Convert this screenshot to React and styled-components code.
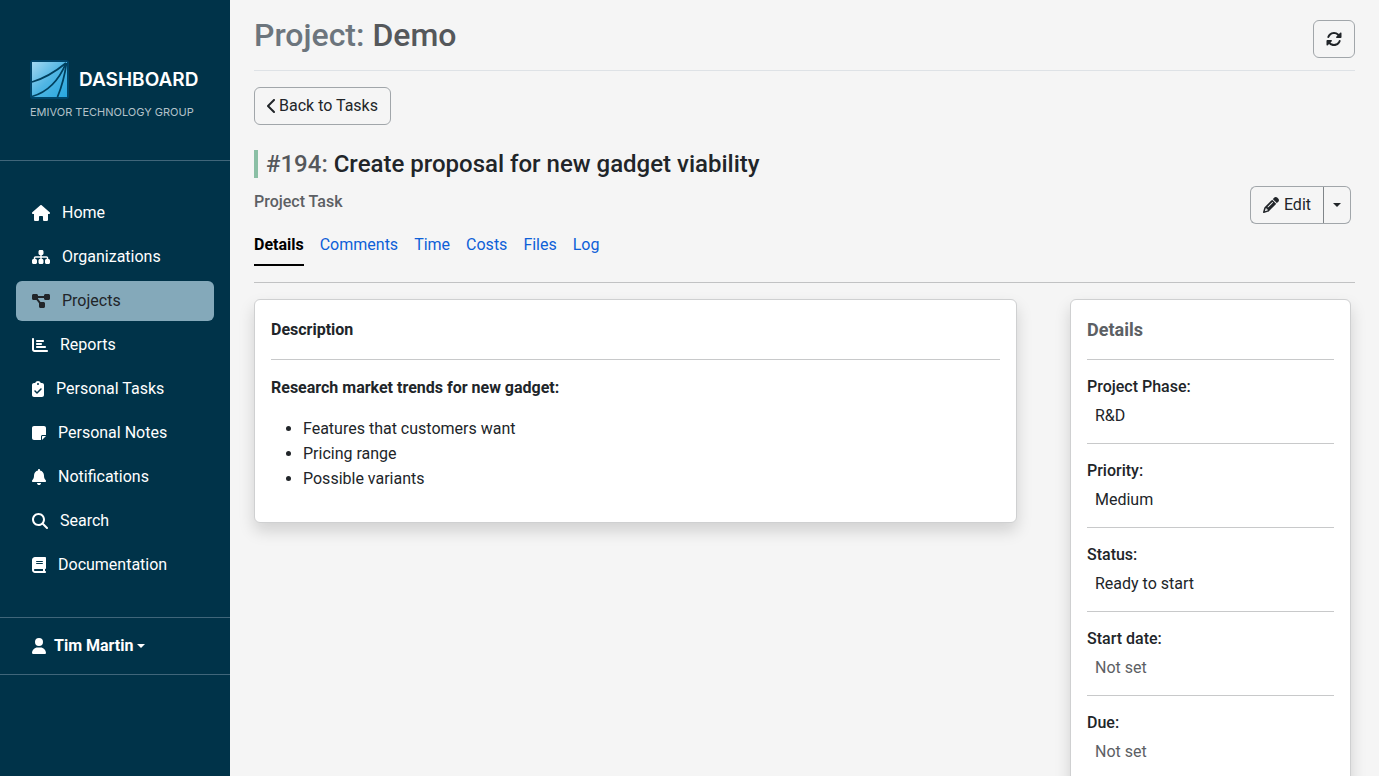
import React from "react";
import styled, { createGlobalStyle } from "styled-components";
import {
  FaHouse,
  FaSitemap,
  FaDiagramProject,
  FaChartBar,
  FaClipboardCheck,
  FaNoteSticky,
  FaBell,
  FaMagnifyingGlass,
  FaBook,
  FaUser,
  FaRotate,
  FaPencil,
  FaChevronLeft,
} from "react-icons/fa6";

const GlobalStyle = createGlobalStyle`
  *, *::before, *::after { box-sizing: border-box; }
  body {
    margin: 0;
    background: #f5f5f5;
    color: #212529;
    font-family: Roboto, "Liberation Sans", sans-serif;
    font-size: 16px;
    line-height: 24px;
  }
  h1, h2, h3, p, ul, dl, dd { margin: 0; padding: 0; }
  button { font: inherit; color: inherit; cursor: pointer; }
  a { text-decoration: none; }
`;

const Shell = styled.div`
  display: flex;
  height: 100vh;
`;

const Sidebar = styled.aside`
  flex: 0 0 230px;
  background: #003349;
  color: #fff;
  overflow: hidden;
`;

const Brand = styled.a`
  display: flex;
  flex-direction: column;
  height: 161px;
  padding: 59px 28px 0 30px;
  border-bottom: 1px solid #40667a;
  color: #fff;
`;

const BrandRow = styled.span`
  display: flex;
  align-items: center;
  gap: 9px;
`;

const BrandName = styled.span`
  padding-top: 2px;
  font-family: Inter, "Liberation Sans", sans-serif;
  font-size: 19px;
  font-weight: 600;
`;

const BrandOwner = styled.span`
  margin-top: 5px;
  color: #b3c2c9;
  font-family: Inter, "Liberation Sans", sans-serif;
  font-size: 11px;
  line-height: 16px;
  white-space: nowrap;
`;

const Icon = styled.span`
  display: flex;
  flex: none;
  width: ${(p) => p.$width || 16}px;
  height: 16px;

  svg {
    width: 100%;
    height: 100%;
  }
`;

const Nav = styled.nav`
  display: flex;
  flex-direction: column;
  gap: 4px;
  padding: 32px 16px;
`;

const NavLink = styled.a`
  display: flex;
  align-items: center;
  gap: 12px;
  height: 40px;
  padding: 0 16px;
  border-radius: 6px;
  background: ${(p) => (p.$active ? "#84a9ba" : "transparent")};
  color: ${(p) => (p.$active ? "#212529" : "#fff")};
`;

const UserBar = styled.div`
  border: solid #40667a;
  border-width: 1px 0;
`;

const UserButton = styled.button`
  display: flex;
  align-items: center;
  gap: 4px;
  width: 100%;
  height: 56px;
  padding: 0 32px;
  border: 0;
  background: none;
  font-weight: 700;

  ${Icon} { margin-right: 4px; }
`;

const Caret = styled.span`
  border: 4px solid transparent;
  border-top-color: currentColor;
  border-bottom: 0;
`;

const Main = styled.main`
  flex: 1;
  min-width: 0;
  padding: 16px 24px;
  overflow-y: auto;
  scrollbar-width: none;
`;

const PageHeader = styled.header`
  display: flex;
  justify-content: space-between;
  align-items: flex-start;
  padding-bottom: 12px;
  border-bottom: 1px solid #dee2e6;
`;

const PageTitle = styled.h1`
  color: #55585b;
  font-size: 32px;
  font-weight: 500;
  line-height: 38px;

  span { color: #6c757d; }
`;

const Button = styled.button`
  display: inline-flex;
  align-items: center;
  gap: 5px;
  height: 38px;
  padding: 0 12px;
  border: 1px solid #a1a6aa;
  border-radius: 6px;
  background: transparent;
`;

const RefreshButton = styled(Button)`
  margin-top: 4px;
`;

const BackButton = styled(Button)`
  gap: 2px;
  margin-top: 16px;
`;

const ButtonGroup = styled.div`
  display: flex;

  button:first-child {
    border-radius: 6px 0 0 6px;
    border-right: 0;
  }
  button:last-child {
    padding: 0 9px;
    border-left-color: #808589;
    border-radius: 0 6px 6px 0;
  }
`;

const TaskTitle = styled.h2`
  margin: 25px 0 8px;
  padding-left: 8px;
  border-left: 4px solid #8bbfa5;
  font-size: 24px;
  font-weight: 500;
  line-height: 28px;

  span { color: #55585b; }
`;

const TaskBar = styled.div`
  display: flex;
  justify-content: space-between;
  align-items: flex-start;
  padding-right: 4px;
`;

const TaskKind = styled.p`
  padding-top: 4px;
  color: #5c6064;
  font-weight: 500;
`;

const Tabs = styled.nav`
  display: flex;
  gap: 16px;
  padding-bottom: 16px;
  border-bottom: 1px solid #c1c2c3;
`;

const Tab = styled.a`
  padding: 9px 0 7px;
  border-bottom: 2px solid ${(p) => (p.$active ? "#000" : "transparent")};
  color: ${(p) => (p.$active ? "#000" : "#0d60d8")};
  font-weight: ${(p) => (p.$active ? 700 : 400)};
`;

const Columns = styled.div`
  display: grid;
  grid-template-columns: minmax(0, 1fr) 281px;
  align-items: start;
  gap: 53px;
  padding: 16px 4px 16px 0;
`;

const Card = styled.section`
  padding: 16px;
  border: 1px solid #cfd0d1;
  border-radius: 6px;
  background: #fff;
  box-shadow: 0 8px 16px rgba(0, 0, 0, 0.15);
`;

const CardTitle = styled.h3`
  padding-bottom: 16px;
  border-bottom: 1px solid #c8c9ca;
  color: ${(p) => (p.$muted ? "#5c6064" : "inherit")};
  font-size: ${(p) => (p.$muted ? 18 : 16)}px;
  font-weight: 700;
  line-height: 27px;
`;

const Lead = styled.p`
  margin: 16px 0;
  font-weight: 700;
`;

const BulletList = styled.ul`
  padding: 0 0 15px 32px;
  line-height: 25px;
`;

const Field = styled.div`
  padding: 15px 0;

  & + & { border-top: 1px solid #c8c9ca; }
`;

const FieldName = styled.dt`
  margin-bottom: 5px;
  font-weight: 500;
`;

const FieldValue = styled.dd`
  padding-left: 8px;
  color: ${(p) => (p.$unset ? "#5c6064" : "inherit")};
`;

const navItems = [
  ["Home", FaHouse, 18],
  ["Organizations", FaSitemap, 18],
  ["Projects", FaDiagramProject, 18],
  ["Reports", FaChartBar, 16],
  ["Personal Tasks", FaClipboardCheck, 12],
  ["Personal Notes", FaNoteSticky, 14],
  ["Notifications", FaBell, 14],
  ["Search", FaMagnifyingGlass, 16],
  ["Documentation", FaBook, 14],
];

const tabs = ["Details", "Comments", "Time", "Costs", "Files", "Log"];

const fields = [
  ["Project Phase:", "R&D"],
  ["Priority:", "Medium"],
  ["Status:", "Ready to start"],
  ["Start date:", null],
  ["Due:", null],
];

function Logo() {
  return (
    <svg width="40" height="40" viewBox="0 0 40 40" aria-hidden="true">
      <defs>
        <linearGradient id="logoFill" x1="0" y1="0" x2="1" y2="1">
          <stop offset="0" stopColor="#a3d8f2" />
          <stop offset="0.5" stopColor="#4fb5e3" />
          <stop offset="1" stopColor="#27a7e0" />
        </linearGradient>
      </defs>
      <rect x="0" y="1" width="39" height="39" rx="3" fill="#00456a" />
      <rect x="2" y="3" width="35" height="35" fill="url(#logoFill)" />
      <g fill="none" stroke="#00405f" strokeWidth="1.8">
        <path d="M2 23 Q19 18 36 4" />
        <path d="M2 37.500 Q25 31 36 4" />
        <path d="M27.500 38 Q34 22 36.500 4" />
      </g>
    </svg>
  );
}

export default function App() {
  return (
    <>
      <GlobalStyle />
      <Shell>
        <Sidebar>
          <Brand href="#home">
            <BrandRow>
              <Logo />
              <BrandName>DASHBOARD</BrandName>
            </BrandRow>
            <BrandOwner>EMIVOR TECHNOLOGY GROUP</BrandOwner>
          </Brand>
          <Nav aria-label="Main">
            {navItems.map(([label, Glyph, width]) => (
              <NavLink key={label} href="#nav" $active={label === "Projects"}>
                <Icon $width={width}>
                  <Glyph />
                </Icon>
                {label}
              </NavLink>
            ))}
          </Nav>
          <UserBar>
            <UserButton type="button">
              <Icon $width={14}>
                <FaUser />
              </Icon>
              Tim Martin
              <Caret />
            </UserButton>
          </UserBar>
        </Sidebar>

        <Main>
          <PageHeader>
            <PageTitle>
              <span>Project:</span> Demo
            </PageTitle>
            <RefreshButton type="button" aria-label="Refresh">
              <Icon>
                <FaRotate />
              </Icon>
            </RefreshButton>
          </PageHeader>

          <BackButton type="button">
            <Icon $width={10}>
              <FaChevronLeft />
            </Icon>
            Back to Tasks
          </BackButton>

          <TaskTitle>
            <span>#194:</span> Create proposal for new gadget viability
          </TaskTitle>
          <TaskBar>
            <TaskKind>Project Task</TaskKind>
            <ButtonGroup>
              <Button type="button">
                <Icon>
                  <FaPencil />
                </Icon>
                Edit
              </Button>
              <Button type="button" aria-label="More actions">
                <Caret />
              </Button>
            </ButtonGroup>
          </TaskBar>

          <Tabs aria-label="Task sections">
            {tabs.map((label) => (
              <Tab key={label} href="#tab" $active={label === "Details"}>
                {label}
              </Tab>
            ))}
          </Tabs>

          <Columns>
            <Card>
              <CardTitle>Description</CardTitle>
              <Lead>Research market trends for new gadget:</Lead>
              <BulletList>
                <li>Features that customers want</li>
                <li>Pricing range</li>
                <li>Possible variants</li>
              </BulletList>
            </Card>
            <Card>
              <CardTitle $muted>Details</CardTitle>
              <dl>
                {fields.map(([name, value]) => (
                  <Field key={name}>
                    <FieldName>{name}</FieldName>
                    <FieldValue $unset={!value}>{value || "Not set"}</FieldValue>
                  </Field>
                ))}
              </dl>
            </Card>
          </Columns>
        </Main>
      </Shell>
    </>
  );
}
